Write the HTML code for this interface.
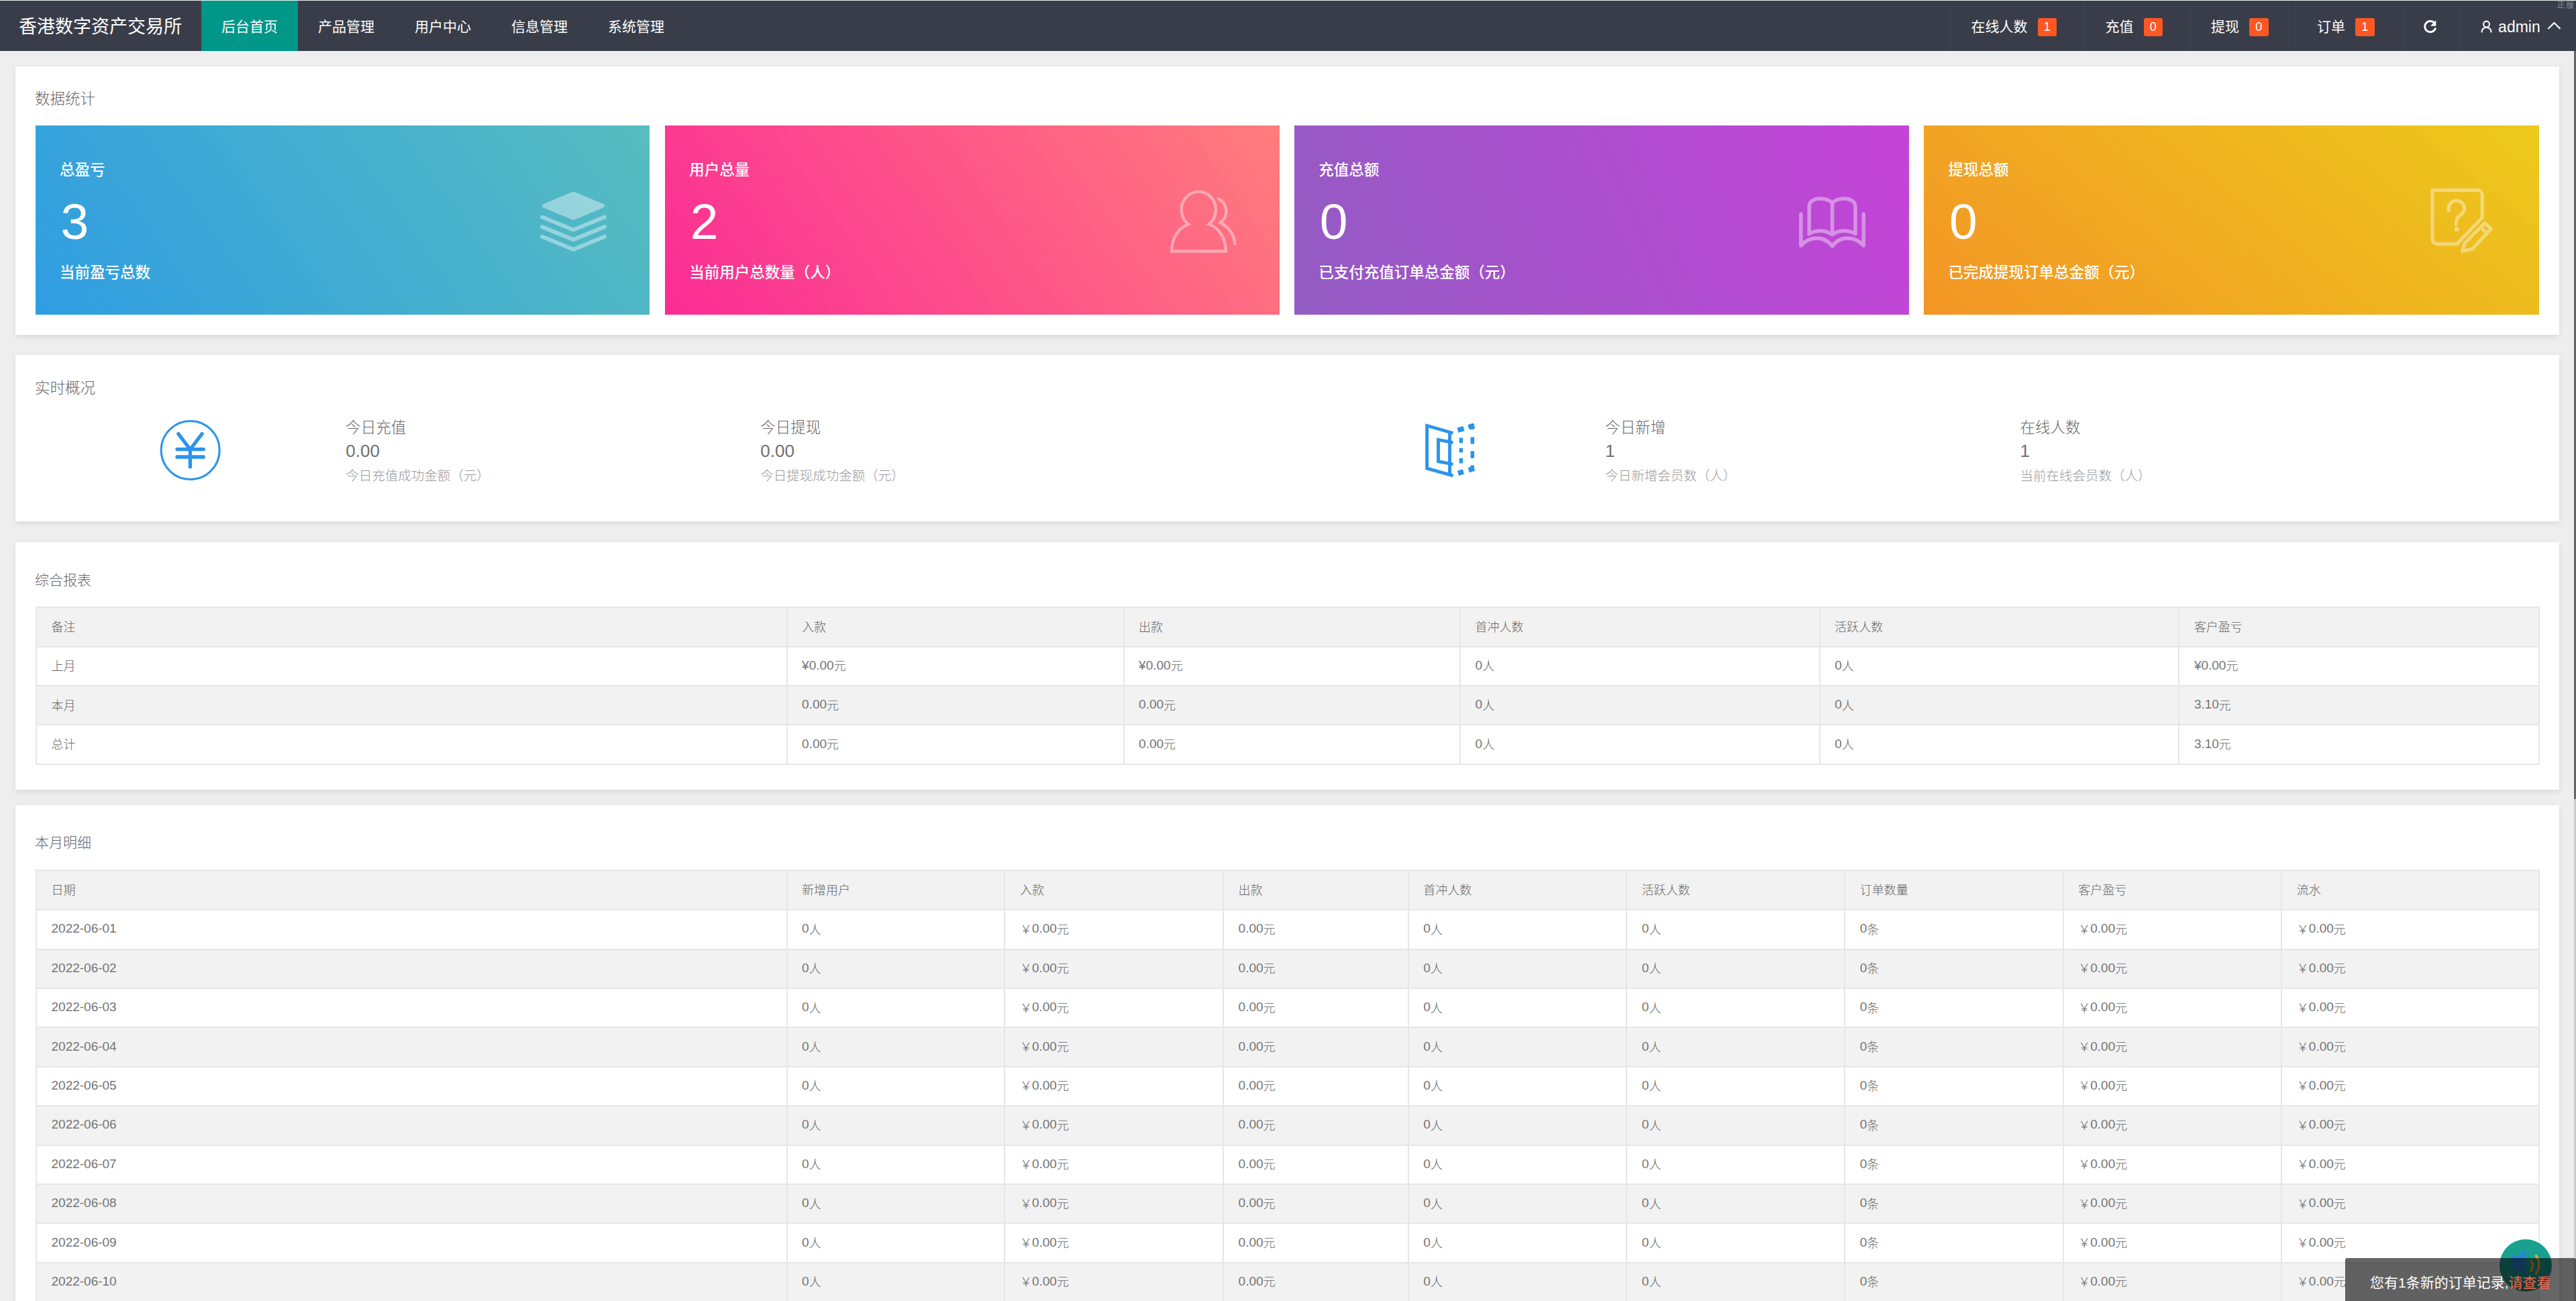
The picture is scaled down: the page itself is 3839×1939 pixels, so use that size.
<!DOCTYPE html><html lang="zh-CN"><head><meta charset="utf-8"><title>香港数字资产交易所</title><style>
*{box-sizing:border-box;margin:0;padding:0}
html,body{width:3839px;height:1939px;overflow:hidden}
body{background:#eee;font-family:"Liberation Sans","Noto Sans CJK SC",sans-serif;color:#666;position:relative;font-weight:300}
.abs{position:absolute;white-space:nowrap}
#hdr{font-weight:400;position:absolute;left:0;top:0;width:3839px;height:76px;background:#393D49;border-top:1px solid #f2f2f2}
#logo{left:28px;top:2px;height:75px;line-height:75px;font-size:27px;color:#fff}
.tab{top:0;height:75px;width:144px;line-height:77px;font-size:21px;color:#fff;text-align:center}
.tab.on{background:#009688}
.nr{top:0;height:75px;line-height:78px;font-size:21px;color:#fff;border-left:1px solid rgba(255,255,255,.04)}
.nr .t{position:absolute;top:0;left:31px}
.bdg{position:absolute;top:26px;height:27px;width:28.5px;border-radius:3px;background:#FF5722;color:#fff;font-size:18px;line-height:27px;text-align:center}
.panel{position:absolute;left:23px;width:3791px;background:#fff;box-shadow:0 3px 9px rgba(0,0,0,.09)}
.ttl{font-size:22.5px;color:#666;height:30px;line-height:30px;left:29px}
.card{font-weight:500;position:absolute;top:88.5px;width:915.5px;height:282px;color:#fff}
.card .a{left:36px;top:52px;height:30px;line-height:30px;font-size:22.5px}
.card .n{left:37.5px;top:98px;height:90px;line-height:90px;font-size:75px}
.card .d{left:36px;top:205px;height:30px;line-height:30px;font-size:22.5px}
.card svg{position:absolute}
.c1{width:915px;left:30px;background:linear-gradient(-125deg,#57bdbf,#2f9de2)}
.c2{left:968.2px;background:linear-gradient(-125deg,#ff7d7d,#fb2c95)}
.c3{left:1906.2px;background:linear-gradient(-113deg,#c543d8,#925cc3)}
.c4{width:916.4px;left:2844.4px;background:linear-gradient(-141deg,#ecca1b,#f39526)}
.s1{font-size:22.5px;color:#666;height:30px;line-height:30px}
.s2{font-size:26px;color:#707070;height:34px;line-height:34px}
.s3{font-size:19.5px;color:#999;height:28px;line-height:28px}
table{position:absolute;left:30px;border-collapse:collapse;table-layout:fixed;width:3731px;font-size:18px;color:#666}
td,th{border:2px solid #e6e6e6;height:58.4px;padding:1px 0 0 21.5px;text-align:left;font-weight:300;line-height:30px;white-space:nowrap}
.l{font-size:19px;position:relative;top:-1.5px;color:#747474}
thead tr,tbody tr:nth-child(even){background:#f2f2f2}
</style></head><body>
<div id="hdr">
<div id="logo" class="abs">香港数字资产交易所</div>
<div class="abs tab on" style="left:300px">后台首页</div>
<div class="abs tab" style="left:444px">产品管理</div>
<div class="abs tab" style="left:588px">用户中心</div>
<div class="abs tab" style="left:732px">信息管理</div>
<div class="abs tab" style="left:876px">系统管理</div>
<div class="abs nr" style="left:2905.6px;width:200.0px"><span class="t">在线人数</span><span class="bdg" style="left:130.0px">1</span></div>
<div class="abs nr" style="left:3105.5px;width:157.5px"><span class="t">充值</span><span class="bdg" style="left:88.0px">0</span></div>
<div class="abs nr" style="left:3263.0px;width:158.0px"><span class="t">提现</span><span class="bdg" style="left:88.0px">0</span></div>
<div class="abs nr" style="left:3421.0px;width:158.5px"><span class="t">订单</span><span class="bdg" style="left:88.0px">1</span></div>
<div class="abs nr" style="left:3579.5px;width:83px"><svg style="position:absolute;left:30px;top:28px" width="21.6" height="21.6" viewBox="0 0 24 24"><path d="M19.2 6.2A9 9 0 1 0 20.8 14" fill="none" stroke="#fff" stroke-width="3.2"/><path d="M21.5 1.5v9.3h-9.3z" fill="#fff"/></svg></div>
<div class="abs nr" style="left:3662.6px;width:177px"><svg style="position:absolute;left:33px;top:29px" width="18" height="19.8" viewBox="0 0 20 22"><circle cx="9.5" cy="6.8" r="5" fill="none" stroke="#fff" stroke-width="2.3"/><path d="M1.6 20.5c.4-5.6 3.6-8.2 7.9-8.2s7.5 2.6 7.9 8.2" fill="none" stroke="#fff" stroke-width="2.3"/></svg><span class="t" style="left:59.5px;font-size:23px">admin</span><svg style="position:absolute;left:132.5px;top:29.5px" width="22" height="14" viewBox="0 0 22 14"><path d="M1.5 12L10.5 3L19.5 12" fill="none" stroke="#fff" stroke-width="2.2"/></svg></div>
<div class="abs" style="left:3810.7px;top:-1px;font-size:12px;letter-spacing:1.5px;line-height:16px;color:#8c909c">正版</div>
</div>
<div class="panel" style="top:98.5px;height:400.3px">
<div class="abs ttl" style="top:34.8px">数据统计</div>
<div class="card c1"><div class="abs a">总盈亏</div><div class="abs n">3</div><div class="abs d">当前盈亏总数</div><svg style="left:747px;top:93px" width="110" height="100" viewBox="800 280 110 100" fill="#fff" stroke="#fff" opacity=".4"><polygon points="811,306.7 854.5,288.5 898,306.7 854.5,324.9" stroke-width="6" stroke-linejoin="round"/><g fill="none" stroke-width="6" stroke-linecap="round" stroke-linejoin="round" stroke="#fff"><polyline points="808,323.5 854.5,342.5 901,323.5"/><polyline points="808,338.1 854.5,357.1 901,338.1"/><polyline points="808,352.7 854.5,371.7 901,352.7"/></g></svg></div>
<div class="card c2"><div class="abs a">用户总量</div><div class="abs n">2</div><div class="abs d">当前用户总数量（人）</div><svg style="left:748.7px;top:93px" width="110" height="100" viewBox="1740 280 110 100" fill="none" opacity=".4" stroke="#fff" stroke-width="4.4" stroke-linejoin="miter"><path d="M1771 334.3A25.6 27 0 1 1 1801.6 334.3C1817 340 1826.5 354 1826.9 374.5H1746.2C1746.6 354 1756 340 1771 334.3Z"/><path d="M1816 296.2A21 21 0 0 1 1818.5 332C1831 338 1839 349 1840.5 363.5" stroke-linecap="round"/></svg></div>
<div class="card c3"><div class="abs a">充值总额</div><div class="abs n">0</div><div class="abs d">已支付充值订单总金额（元）</div><svg style="left:710.3px;top:63px" width="200" height="160" viewBox="0 0 200 160" fill="none" opacity=".4" stroke="#fff" stroke-width="5.5" stroke-linecap="round" stroke-linejoin="round"><path d="M44.9 69V116C52 108 60 105 68 105C78 105 86 109 91.6 117C97 109 105 105 115 105C123 105 131 108 138.3 116V69"/><path d="M91.6 52V99.6M91.6 52C86 48 80 46.1 74 46.1C65 46.1 57.2 50 57.2 57.8V98.4C62 95.5 68 94 74 94C80 94 86 96 91.6 99.6C97 96 103 94 109 94C115 94 121 95.5 126 98.4V57.8C126 50 118 46.1 109 46.1C103 46.1 97 48 91.6 52Z"/></svg></div>
<div class="card c4"><div class="abs a">提现总额</div><div class="abs n">0</div><div class="abs d">已完成提现订单总金额（元）</div><svg style="left:712.6px;top:63px" width="200" height="160" viewBox="0 0 200 160" fill="none" opacity=".4" stroke="#fff" stroke-width="5.2" stroke-linejoin="round"><path d="M45 33.4H112A7.2 7.2 0 0 1 119.2 40.6V74.5L81.5 113.6H52.2A7.2 7.2 0 0 1 45 106.4Z"/><path d="M69.5 64A11.7 11.7 0 1 1 87 70.5C82 74 80.3 77 80.3 84" stroke-linecap="round"/><circle cx="81.2" cy="91.8" r="3.7" fill="#fff" stroke="none"/><path d="M89.5 124.5L93.5 112L123 82.5L132.5 91L104.5 121Z"/><path d="M117 88.5L126 97.5"/></svg></div>
</div>
<div class="panel" style="top:528.8px;height:248.2px">
<div class="abs ttl" style="top:35px">实时概况</div>
<svg class="abs" style="left:177px;top:71.2px" width="200" height="140" viewBox="0 0 200 140" fill="none" stroke="#2b94ea" stroke-linecap="round"><circle cx="83.65" cy="71.05" r="43.5" stroke-width="3"/><g stroke-width="5.3"><path d="M65.8 46.5L83.4 69.9L101.1 46.5M64 69.7H103.3M64 81H103.3M83.4 69.9V95.7"/></g></svg>
<svg class="abs" style="left:2057px;top:71.2px" width="200" height="140" viewBox="0 0 200 140" fill="none" stroke="#2b94ea" stroke-width="4.8"><path d="M85.5 45.5L46.6 34.4V98.1L85.5 108.9M80.5 43V108"/><path d="M85.5 59.7L63.5 55.4V87.7L85.5 92"/><g stroke-width="7.5"><path d="M92.5 41.2L101.5 38.6M108.5 36.6L117 34.1"/><path d="M93 105.3L101 102.9M108.7 100.6L117 98.1"/></g><g stroke-width="5.5"><path d="M114.3 32V40M114.3 51.4V61.5M114.3 72.3V82.8M114.3 93.6V101.5"/><path d="M97.4 52.5V60.3M97.4 67.8V74.2M97.4 82.8V90.4"/></g></svg>
<div class="abs s1" style="left:492.3px;top:94.2px">今日充值</div>
<div class="abs s2" style="left:492.3px;top:126.4px">0.00</div>
<div class="abs s3" style="left:492.3px;top:166.2px">今日充值成功金额（元）</div>
<div class="abs s1" style="left:1110.3px;top:94.2px">今日提现</div>
<div class="abs s2" style="left:1110.3px;top:126.4px">0.00</div>
<div class="abs s3" style="left:1110.3px;top:166.2px">今日提现成功金额（元）</div>
<div class="abs s1" style="left:2369.3px;top:94.2px">今日新增</div>
<div class="abs s2" style="left:2369.3px;top:126.4px">1</div>
<div class="abs s3" style="left:2369.3px;top:166.2px">今日新增会员数（人）</div>
<div class="abs s1" style="left:2987.4px;top:94.2px">在线人数</div>
<div class="abs s2" style="left:2987.4px;top:126.4px">1</div>
<div class="abs s3" style="left:2987.4px;top:166.2px">当前在线会员数（人）</div>
</div>
<div class="panel" style="top:808.1px;height:369.1px">
<div class="abs ttl" style="font-size:21px;top:42.0px">综合报表</div>
<table style="top:96.2px"><colgroup><col style="width:1118.6px"><col style="width:502.0px"><col style="width:501.5px"><col style="width:535.7px"><col style="width:535.6px"><col style="width:536.6px"></colgroup>
<thead><tr><th>备注</th><th>入款</th><th>出款</th><th>首冲人数</th><th>活跃人数</th><th>客户盈亏</th></tr></thead><tbody>
<tr><td>上月</td><td><span class="l">¥0.00</span>元</td><td><span class="l">¥0.00</span>元</td><td><span class="l">0</span>人</td><td><span class="l">0</span>人</td><td><span class="l">¥0.00</span>元</td></tr>
<tr><td>本月</td><td><span class="l">0.00</span>元</td><td><span class="l">0.00</span>元</td><td><span class="l">0</span>人</td><td><span class="l">0</span>人</td><td><span class="l">3.10</span>元</td></tr>
<tr><td>总计</td><td><span class="l">0.00</span>元</td><td><span class="l">0.00</span>元</td><td><span class="l">0</span>人</td><td><span class="l">0</span>人</td><td><span class="l">3.10</span>元</td></tr>
</tbody></table></div>
<div class="panel" style="top:1199.9px;height:900px">
<div class="abs ttl" style="font-size:21px;top:41.0px">本月明细</div>
<table style="top:96.5px"><colgroup><col style="width:1118.5px"><col style="width:324.9px"><col style="width:325.7px"><col style="width:275.7px"><col style="width:325.6px"><col style="width:324.8px"><col style="width:325.6px"><col style="width:325.6px"><col style="width:383.8px"></colgroup>
<thead><tr><th style="height:58.8px">日期</th><th style="height:58.8px">新增用户</th><th style="height:58.8px">入款</th><th style="height:58.8px">出款</th><th style="height:58.8px">首冲人数</th><th style="height:58.8px">活跃人数</th><th style="height:58.8px">订单数量</th><th style="height:58.8px">客户盈亏</th><th style="height:58.8px">流水</th></tr></thead><tbody>
<tr><td><span class="l">2022-06-01</span></td><td><span class="l">0</span>人</td><td>￥<span class="l">0.00</span>元</td><td><span class="l">0.00</span>元</td><td><span class="l">0</span>人</td><td><span class="l">0</span>人</td><td><span class="l">0</span>条</td><td>￥<span class="l">0.00</span>元</td><td>￥<span class="l">0.00</span>元</td></tr>
<tr><td><span class="l">2022-06-02</span></td><td><span class="l">0</span>人</td><td>￥<span class="l">0.00</span>元</td><td><span class="l">0.00</span>元</td><td><span class="l">0</span>人</td><td><span class="l">0</span>人</td><td><span class="l">0</span>条</td><td>￥<span class="l">0.00</span>元</td><td>￥<span class="l">0.00</span>元</td></tr>
<tr><td><span class="l">2022-06-03</span></td><td><span class="l">0</span>人</td><td>￥<span class="l">0.00</span>元</td><td><span class="l">0.00</span>元</td><td><span class="l">0</span>人</td><td><span class="l">0</span>人</td><td><span class="l">0</span>条</td><td>￥<span class="l">0.00</span>元</td><td>￥<span class="l">0.00</span>元</td></tr>
<tr><td><span class="l">2022-06-04</span></td><td><span class="l">0</span>人</td><td>￥<span class="l">0.00</span>元</td><td><span class="l">0.00</span>元</td><td><span class="l">0</span>人</td><td><span class="l">0</span>人</td><td><span class="l">0</span>条</td><td>￥<span class="l">0.00</span>元</td><td>￥<span class="l">0.00</span>元</td></tr>
<tr><td><span class="l">2022-06-05</span></td><td><span class="l">0</span>人</td><td>￥<span class="l">0.00</span>元</td><td><span class="l">0.00</span>元</td><td><span class="l">0</span>人</td><td><span class="l">0</span>人</td><td><span class="l">0</span>条</td><td>￥<span class="l">0.00</span>元</td><td>￥<span class="l">0.00</span>元</td></tr>
<tr><td><span class="l">2022-06-06</span></td><td><span class="l">0</span>人</td><td>￥<span class="l">0.00</span>元</td><td><span class="l">0.00</span>元</td><td><span class="l">0</span>人</td><td><span class="l">0</span>人</td><td><span class="l">0</span>条</td><td>￥<span class="l">0.00</span>元</td><td>￥<span class="l">0.00</span>元</td></tr>
<tr><td><span class="l">2022-06-07</span></td><td><span class="l">0</span>人</td><td>￥<span class="l">0.00</span>元</td><td><span class="l">0.00</span>元</td><td><span class="l">0</span>人</td><td><span class="l">0</span>人</td><td><span class="l">0</span>条</td><td>￥<span class="l">0.00</span>元</td><td>￥<span class="l">0.00</span>元</td></tr>
<tr><td><span class="l">2022-06-08</span></td><td><span class="l">0</span>人</td><td>￥<span class="l">0.00</span>元</td><td><span class="l">0.00</span>元</td><td><span class="l">0</span>人</td><td><span class="l">0</span>人</td><td><span class="l">0</span>条</td><td>￥<span class="l">0.00</span>元</td><td>￥<span class="l">0.00</span>元</td></tr>
<tr><td><span class="l">2022-06-09</span></td><td><span class="l">0</span>人</td><td>￥<span class="l">0.00</span>元</td><td><span class="l">0.00</span>元</td><td><span class="l">0</span>人</td><td><span class="l">0</span>人</td><td><span class="l">0</span>条</td><td>￥<span class="l">0.00</span>元</td><td>￥<span class="l">0.00</span>元</td></tr>
<tr><td><span class="l">2022-06-10</span></td><td><span class="l">0</span>人</td><td>￥<span class="l">0.00</span>元</td><td><span class="l">0.00</span>元</td><td><span class="l">0</span>人</td><td><span class="l">0</span>人</td><td><span class="l">0</span>条</td><td>￥<span class="l">0.00</span>元</td><td>￥<span class="l">0.00</span>元</td></tr>
<tr><td><span class="l">2022-06-11</span></td><td><span class="l">0</span>人</td><td>￥<span class="l">0.00</span>元</td><td><span class="l">0.00</span>元</td><td><span class="l">0</span>人</td><td><span class="l">0</span>人</td><td><span class="l">0</span>条</td><td>￥<span class="l">0.00</span>元</td><td>￥<span class="l">0.00</span>元</td></tr>
</tbody></table></div>
<div class="abs" style="left:3836px;top:76px;width:3px;height:1863px;background:#ccc"></div>
<div class="abs" style="left:3836px;top:76px;width:3px;height:1114.7px;background:#666"></div>
<div class="abs" style="left:3725.1px;top:1847px;width:77.8px;height:77.8px;border-radius:50%;background:#1aa08f"><svg width="78" height="78" viewBox="0 0 78 78" style="position:absolute;left:0;top:0"><path d="M38.5 14.4L28.5 23.2L17.6 25.7V45L28.5 46.7L38.5 54.2Z" fill="#2b7de6" opacity=".78"/><path d="M47 32.5Q52.5 39.5 47 46.5M54.5 24.5Q63.5 38 54.5 51.5" fill="none" stroke="#f5a623" stroke-width="3.6" stroke-linecap="round"/></svg></div>
<div class="abs" style="left:3495px;top:1874.8px;width:344px;height:80px;background:rgba(0,0,0,.6);border-radius:3px 3px 0 0;color:#fff;font-weight:400;font-size:21px;line-height:30px;padding:21.8px 0 0 37px">您有1条新的订单记录,<span style="color:#f4644d">请查看</span></div>
</body></html>
